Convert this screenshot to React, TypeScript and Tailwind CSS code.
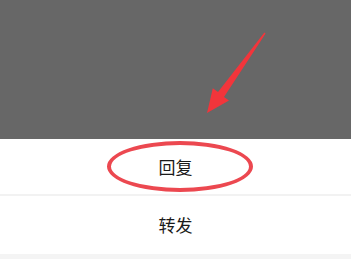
const App = () => {
  return (
    <div
      className="relative w-[351px] h-[259px] overflow-hidden bg-[#f4f4f4] flex flex-col"
      style={{ fontFamily: '"Noto Sans CJK SC", "Noto Sans", sans-serif' }}
    >
      {/* dimmed background */}
      <div className="h-[139px] bg-[#676767] shrink-0" />

      {/* action sheet */}
      <div className="bg-white">
        <div className="relative h-[57px] flex items-center justify-center border-b-2 border-[#f2f2f2]">
          <span className="text-[17px] text-[#1a1a1a]">回复</span>
          <div className="absolute left-[107px] top-[2px] w-[146px] h-[51px] rounded-[50%] border-[4px] border-[#ec4850]" />
        </div>
        <div className="h-[58px] flex items-center justify-center">
          <span className="text-[17px] text-[#1a1a1a]">转发</span>
        </div>
      </div>

      {/* annotation arrow */}
      <svg className="absolute left-0 top-0" width="351" height="259" viewBox="0 0 351 259">
        <polygon
          points="207,113 212.8,88.2 218,92 264.4,32.6 265.6,33.4 224,97 229,100.6"
          fill="#f2353b"
        />
      </svg>
    </div>
  );
};

export default App;
